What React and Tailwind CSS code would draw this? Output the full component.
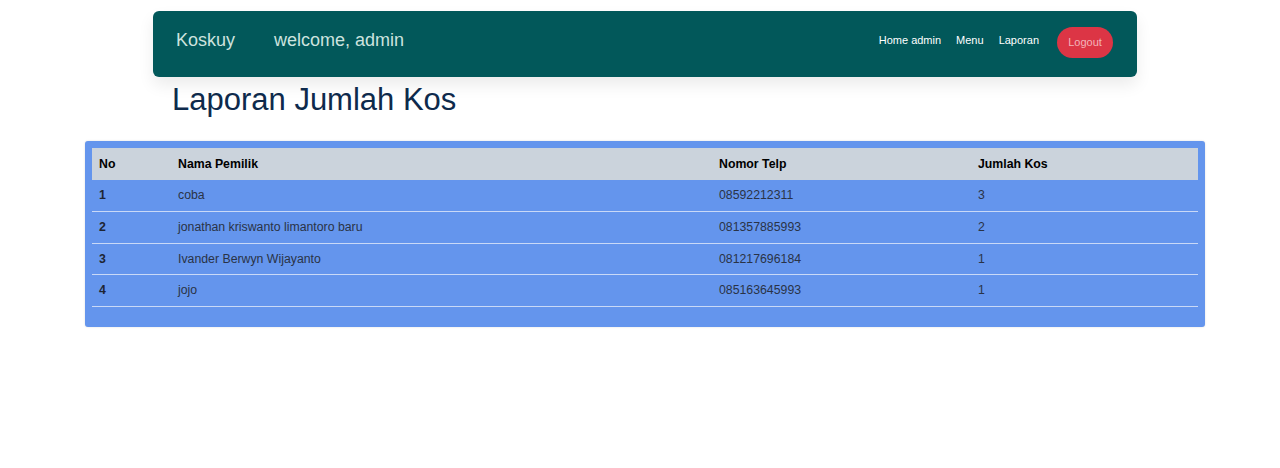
import React from 'react'

const rows = [
  { no: 1, nama: 'coba', telp: '08592212311', jumlah: 3 },
  { no: 2, nama: 'jonathan kriswanto limantoro baru', telp: '081357885993', jumlah: 2 },
  { no: 3, nama: 'Ivander Berwyn Wijayanto', telp: '081217696184', jumlah: 1 },
  { no: 4, nama: 'jojo', telp: '085163645993', jumlah: 1 },
]

function Navbar() {
  return (
    <nav className="ml-[153px] mt-[11px] flex h-[66px] w-[984px] items-center justify-between rounded-md bg-[#02585a] pb-[11px] pl-[23px] pr-[24px] pt-[3px] shadow-[0_8px_16px_rgba(0,0,0,0.08)]">
      <div className="flex items-center text-[18px] text-[#cde3df]">
        <span>Koskuy</span>
        <span className="ml-[39px]">welcome, admin</span>
      </div>
      <div className="flex items-center text-[11px] text-white">
        <a className="mr-[15px]">Home admin</a>
        <a className="mr-[15px]">Menu</a>
        <a className="mr-[18px]">Laporan</a>
        <button className="mt-[4px] h-[31px] w-[56px] rounded-full bg-[#dc3545] text-[11px] text-[#f3b3b9]">
          Logout
        </button>
      </div>
    </nav>
  )
}

export default function App() {
  return (
    <div className="min-h-[468px] bg-white font-['Liberation_Sans',Arial,sans-serif] text-[#212529]">
      <Navbar />
      <div className="ml-[153px] w-[984px]">
        <h1 className="ml-[19px] mt-[4px] text-[31px] leading-[37px] text-[#0e2a4c]">Laporan Jumlah Kos</h1>
      </div>

      <div className="ml-[85px] mt-[23px] w-[1120px] rounded-[3px] bg-[#6495ed] p-[7px] pb-[20px] shadow-[0_0_2px_rgba(0,0,0,0.15)]">
        <table className="w-full border-collapse text-left text-[12.3px]">
          <thead>
            <tr className="bg-[#cbd3dc] text-black">
              <th className="h-[32px] w-[79px] px-[7px] font-bold">No</th>
              <th className="w-[541px] px-[7px] font-bold">Nama Pemilik</th>
              <th className="w-[259px] px-[7px] font-bold">Nomor Telp</th>
              <th className="px-[7px] font-bold">Jumlah Kos</th>
            </tr>
          </thead>
          <tbody>
            {rows.map((r) => (
              <tr key={r.no} className="border-b border-[#c9d9f7] text-[#2a3346]">
                <td className="h-[31.5px] px-[7px] font-bold text-[#1e2533]">{r.no}</td>
                <td className="px-[7px]">{r.nama}</td>
                <td className="px-[7px]">{r.telp}</td>
                <td className="px-[7px]">{r.jumlah}</td>
              </tr>
            ))}
          </tbody>
        </table>
      </div>
    </div>
  )
}
